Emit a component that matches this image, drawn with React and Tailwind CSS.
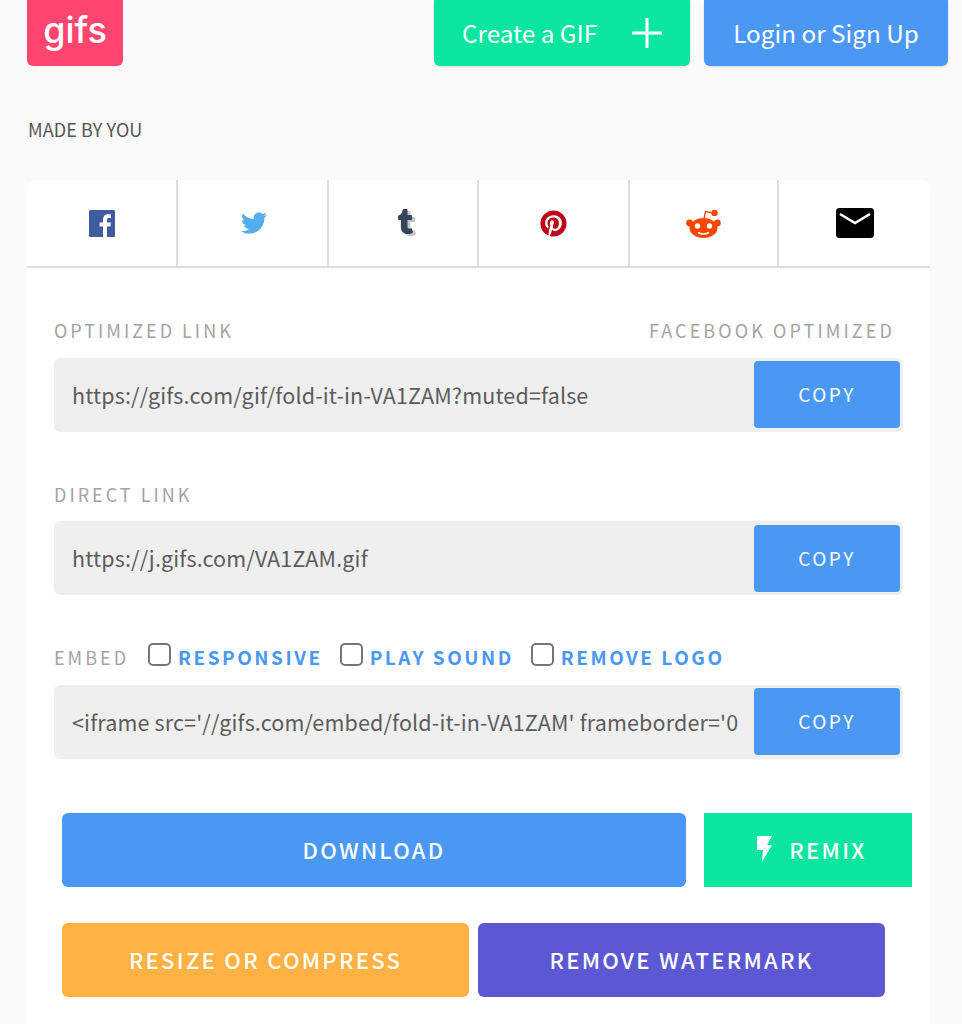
import { FaTwitter, FaTumblr, FaPinterest } from "react-icons/fa";

const font = "font-['Noto_Sans_CJK_SC','Source_Sans_Pro','Noto_Sans',sans-serif]";

/* ================= SHARE ICONS ================= */
function FacebookIcon() {
  return (
    <svg width="26" height="27" viewBox="0 0 26 27">
      <rect width="26" height="27" rx="1.5" fill="#3e5c9e" />
      <path d="M18 27 V16.5 h3.4 l.5-4 H18 V10 c0-1.2.3-2 2-2 h2 V4.4 c-.4 0-1.6-.1-3-.1 -3 0-5 1.8-5 5.1 V12.5 h-3.4 v4 H14 V27 z" fill="#fff" />
    </svg>
  );
}

function RedditIcon() {
  return (
    <svg width="35" height="29" viewBox="0 0 35 29">
      <circle cx="3.6" cy="14" r="3.4" fill="#ff4500" />
      <circle cx="31.4" cy="14" r="3.4" fill="#ff4500" />
      <ellipse cx="17.5" cy="19" rx="14" ry="10" fill="#ff4500" />
      <path d="M18 10 L19.5 2.5 L27 4" fill="none" stroke="#ff4500" strokeWidth="1.4" />
      <circle cx="28.5" cy="4" r="3.2" fill="#ff4500" />
      <circle cx="11.5" cy="17" r="2.7" fill="#fff" />
      <circle cx="23.5" cy="17" r="2.7" fill="#fff" />
      <path d="M12 23.5 Q17.5 26.5 23 23.5" fill="none" stroke="#fff" strokeWidth="1.5" />
    </svg>
  );
}

function MailIcon() {
  return (
    <svg width="38" height="30" viewBox="0 0 38 30">
      <rect x="0" y="0" width="38" height="30" rx="3.5" fill="#000" />
      <path d="M4 6 L19 15 L34 6" fill="none" stroke="#fff" strokeWidth="2.6" />
    </svg>
  );
}

function TumblrIcon() {
  return (
    <span className="relative block h-[28px] w-[20px]">
      <FaTumblr className="absolute left-[3px] top-[2px] text-[25px] text-[#c4c4c4]" />
      <FaTumblr className="absolute left-0 top-0 text-[25px] text-[#35465c]" />
    </span>
  );
}

function BoltIcon() {
  return (
    <svg width="18" height="26" viewBox="0 0 18 26">
      <path d="M2 0 H17 L12 9 H17 L7 26 L8 14 H2 Z" fill="#fff" />
    </svg>
  );
}

/* ================= LINK ROW ================= */
function CopyRow({ value, buttonClass = "" }) {
  return (
    <div className="flex h-[74px] w-[849px] items-center justify-between rounded-md bg-[#efefef] pl-[18px] pr-[3px]">
      <div className="w-[666px] overflow-hidden whitespace-nowrap text-[21.5px] tracking-[0.15px] text-[#5c5c5c]">{value}</div>
      <button className={`h-[67px] w-[146px] rounded bg-[#4b98f4] text-[19px] tracking-[2.5px] text-white ${buttonClass}`}>COPY</button>
    </div>
  );
}

function EmbedOption({ label, className }) {
  return (
    <div className={`flex items-center gap-[7px] ${className}`}>
      <span className="mb-[6px] block h-[23px] w-[23px] rounded-[5px] border-2 border-[#767676] bg-white" />
      <span className="text-[19px] font-bold tracking-[2.5px] text-[#4b98f4]">{label}</span>
    </div>
  );
}

export default function App() {
  const shareIcons = [
    { w: "w-[151px]", icon: <FacebookIcon /> },
    { w: "w-[151px]", icon: <FaTwitter className="ml-[2px] text-[26px] text-[#55acee]" /> },
    { w: "w-[150px]", icon: <TumblrIcon /> },
    { w: "w-[151px]", icon: <FaPinterest className="text-[27px] text-[#bd081c]" /> },
    { w: "w-[149px]", icon: <RedditIcon /> },
    { w: "flex-1", icon: <MailIcon /> },
  ];

  return (
    <div className={`h-[1024px] overflow-hidden bg-[#fafafa] ${font}`}>
      {/* ================= HEADER ================= */}
      <div className="flex h-[66px] items-stretch pl-[27px] pr-[14px]">
        <div className="flex w-[96px] items-center justify-center rounded-b-md bg-[#ff4570] pb-[6px] font-['Inter',sans-serif] text-[36px] font-medium leading-none text-white">
          gifs
        </div>
        <button className="ml-auto flex w-[256px] items-center justify-between rounded-b-md bg-[#0ae69f] pl-[28px] pr-[28px] text-[24.3px] text-white shadow-sm">
          Create a GIF
          <svg width="30" height="30" viewBox="0 0 30 30">
            <path d="M15 1 V29 M1 15 H29" stroke="#fff" strokeWidth="3" strokeLinecap="round" />
          </svg>
        </button>
        <button className="ml-[14px] w-[244px] rounded-b-md bg-[#4b98f4] text-[24.3px] text-white shadow-sm">Login or Sign Up</button>
      </div>

      <div className="ml-[28px] mt-[49px] h-[29px] text-[18px] leading-[28px] tracking-[0.1px] text-[#555]">MADE BY YOU</div>

      {/* ================= CARD ================= */}
      <div className="ml-[27px] mt-[36px] w-[903px] rounded-t-lg bg-white pb-[40px]">
        <div className="flex h-[88px] border-b-2 border-[#dedede]">
          {shareIcons.map((item, i) => (
            <div key={i} className={`flex items-center justify-center border-r-2 border-[#dedede] last:border-r-0 ${item.w}`}>
              {item.icon}
            </div>
          ))}
        </div>

        <div className="pl-[27px] pt-[47px]">
          <div className="flex h-[30px] w-[841px] items-center justify-between text-[18px] tracking-[3px] text-[#a3a3a3]">
            <span>OPTIMIZED LINK</span>
            <span className="tracking-[3.1px]">FACEBOOK OPTIMIZED</span>
          </div>
          <div className="mt-[13px]">
            <CopyRow value="https://gifs.com/gif/fold-it-in-VA1ZAM?muted=false" buttonClass="mb-[2px]" />
          </div>

          <div className="mt-[47px] flex h-[30px] items-center text-[18px] tracking-[3px] text-[#a3a3a3]">DIRECT LINK</div>
          <div className="mt-[12px]">
            <CopyRow value="https://j.gifs.com/VA1ZAM.gif" />
          </div>

          <div className="mt-[47px] flex h-[30px] items-center text-[18px] tracking-[3px] text-[#a3a3a3]">
            <span>EMBED</span>
            <EmbedOption label="RESPONSIVE" className="ml-[19px]" />
            <EmbedOption label="PLAY SOUND" className="ml-[17px]" />
            <EmbedOption label="REMOVE LOGO" className="ml-[17px]" />
          </div>
          <div className="mt-[13px]">
            <CopyRow value="<iframe src='//gifs.com/embed/fold-it-in-VA1ZAM' frameborder='0'" buttonClass="mb-[2px]" />
          </div>

          {/* ================= ACTIONS ================= */}
          <div className="ml-[8px] mt-[54px] flex h-[74px] gap-[18px] text-[22px] font-medium tracking-[2.3px] text-white">
            <button className="w-[624px] rounded-md bg-[#4b98f4] pb-[2px]">DOWNLOAD</button>
            <button className="flex w-[208px] items-center justify-center gap-[16px] bg-[#0ae69f] pb-[2px] pl-[6px]">
              <BoltIcon />
              REMIX
            </button>
          </div>
          <div className="ml-[8px] mt-[36px] flex h-[74px] gap-[9px] text-[22px] font-medium tracking-[2.3px] text-white">
            <button className="w-[407px] rounded-md bg-[#ffb144] pb-[2px]">RESIZE OR COMPRESS</button>
            <button className="w-[407px] rounded-md bg-[#5c58d4] pb-[2px]">REMOVE WATERMARK</button>
          </div>
        </div>
      </div>
    </div>
  );
}
